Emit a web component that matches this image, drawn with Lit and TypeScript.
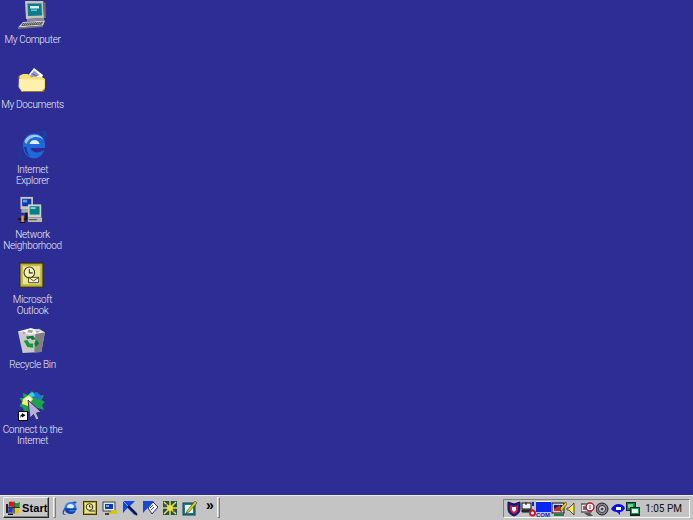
import { LitElement, html, css, svg, nothing } from "lit";
import { customElement } from "lit/decorators.js";

const flag = svg`<path d="M1 4h2v9H1z" fill="#222"/><path d="M4 2 Q6 1 8.500 2.500 L8 7 Q6 6 3.500 7Z" fill="#d8141c"/><path d="M9.500 2.500 Q12 4 15 2 L14.500 7 Q12 8.500 9 7Z" fill="#1f9a2c"/><path d="M3.500 8 Q6 7 8 8 L7.500 13 Q5.500 12 3 13Z" fill="#1c3cc8"/><path d="M9 8 Q12 9.500 14.500 8 L14 13 Q11.500 14.500 8.500 13Z" fill="#e8c814"/><path d="M3 13.500h5v1.500H3zM8.500 1.500h1v12h-1zM3 7.200h12v.8H3z" fill="#111"/>`;

const ieSmall = svg`<path d="M13.500 1.500 Q16.500 3 12 4 Q5 5 2 12 Q1 15 4.500 14 Q1.500 16 .5 13.500 Q.5 9 5 5 Q10 1 13.500 1.500Z" fill="#1c50c8"/><circle cx="8.500" cy="8" r="6" fill="#2f80ea"/><ellipse cx="8.500" cy="6.500" rx="3.300" ry="2.600" fill="#e2f2ff"/><path d="M2.800 8.200H14.500V10H6.500Q7.500 12 10 11.800L13.800 10.800Q12 14.500 8.500 14Q3 13.500 2.800 8.200Z" fill="#1244a8"/>`;

const mycomputer = svg`<g transform="translate(2,1)"><path d="M7 1 L25 1 L26 18 L8 19Z" fill="#c4c4bc"/><path d="M25 1 L27.500 3 L28 18 L26 18Z" fill="#6c6c74"/><path d="M9.500 3.500 L23.500 3.500 L24 15.500 L10 16Z" fill="#0c7c8c"/><path d="M12 6 H21 V8.500 H12Z" fill="#d6f0f4"/><path d="M13 9.500 H19 V11 H13Z" fill="#70c4d0"/><path d="M9 19 L26 18 L26 20.500 L9 21.500Z" fill="#8c8c8c"/><path d="M5 22 L27 20.500 L25 25.500 L0 27.500Z" fill="#d4d4cc"/><path d="M5 23 L25 21.800 L24 24.500 L3 26Z" fill="#50505c"/><path d="M6 23.300l18-1M5 24.500l18.500-1.100" stroke="#cfcfcf" stroke-width=".7" stroke-dasharray="1 1"/><path d="M0 27.500 L25 25.500 L25 27 L0 29Z" fill="#787878"/></g>`;

const folder = svg`<path d="M11 13 L18 4 L27 11 L25 16Z" fill="#ffffff"/><path d="M14 12 L18 6.500 L23.500 11 L18 14Z" fill="#8e98d0"/><path d="M15.500 9.500 L21 12M13.500 12 L20 14" stroke="#5a5a96" stroke-width=".8"/><path d="M3 12 L7 10 L12 10 L14 12.500 L26 13 L29 15 L29 25 L27 28 L6 28 L2.500 23Z" fill="#f7dd77"/><path d="M3.500 15 L25 15.500 L28.500 16.500 L28 25 L26.500 27 L6.500 27 L4 23Z" fill="#fff0ae"/><path d="M7 28 L27 28 L29 25 L29 24 L26 27 L6 27Z" fill="#8c7a2c"/><path d="M3 12 L3 15" stroke="#8c7a2c"/>`;

const ie = svg`<path d="M27 1.500 C32 1 32 7 29 12 L26 8 C28 5 28 3.200 25 3.600 C15 5.500 5 15 3.800 25 C3.500 29 7 30 12 27.500 C7 32 1.500 32 2.500 24 C4 13 15 3 27 1.500Z" fill="#16409e"/><path d="M7 16 A11 11.500 0 0 1 29 16 L29 19 L14.500 19 C15.500 24 23 25 28 21 C26 29 18 31 13 28 C9 26 7 21 7 16Z" fill="#2168dc"/><path d="M8.500 13 C10 7 17 4 24 7 C26 8.500 27 10 27.500 11 C23 6 13 7 10.500 15Z" fill="#9ccbff"/><path d="M13.500 15 C14.500 9.500 22.500 9.500 23.500 15Z" fill="#dcefff"/><path d="M8 18 C8.500 22 10.500 26 14 27.500 C11.500 24 10.500 21 10.500 18Z" fill="#0f3f9c"/>`;

const network = svg`<g transform="translate(2,2) scale(.83,.93)"><rect x="3" y="1" width="15" height="13" fill="#c8c8c0"/><rect x="5" y="3" width="11" height="8" fill="#1038a8"/><path d="M6 4h5v3H6z" fill="#5aa0e8"/><rect x="4" y="14" width="14" height="4" fill="#a8a8a0"/><rect x="12" y="9" width="16" height="14" fill="#d0d0c8"/><rect x="14" y="11" width="12" height="9" fill="#088088"/><path d="M15 12h6v2h-6z" fill="#80d8d8"/><rect x="12" y="23" width="17" height="5" fill="#b8b8b0"/><path d="M13 25h10v1H13z" fill="#404040"/><path d="M0 24h11v2H0z" fill="#141414"/><path d="M4 21h3v7H4z" fill="#e0a018"/><path d="M2 28h7v1H2zM9 18h2v7H9z" fill="#101010"/></g>`;

const outlook = svg`<g transform="translate(2.300,3.200) scale(.85,.89)"><rect x="2" y="1" width="27" height="27" fill="#b8ac34" stroke="#322c00"/><rect x="4" y="3" width="23" height="23" fill="#c8c050"/><rect x="5.500" y="4.500" width="20" height="20" fill="#e8e49c"/><circle cx="13" cy="11.500" r="6.200" fill="#f4f0c0" stroke="#3c3810" stroke-width="1.200"/><path d="M13 7.500V12H17" fill="none" stroke="#3c3810" stroke-width="1.200"/><path d="M12 17H24V23H12Z" fill="#f8f4c8" stroke="#3c3810"/><path d="M12 17L18 21L24 17" fill="none" stroke="#3c3810"/></g>`;

const bin = svg`<g transform="translate(-3.900,3.100) scale(1.170,.86)"><path d="M5 5 L23 2 L28 6 L25 29 L9 30Z" fill="#c8c8c8"/><path d="M20 3.500 L28 6 L25 29 L19 29.500Z" fill="#808084"/><path d="M5 5 L16 1 L28 6 L16 9Z" fill="#f4f4f4"/><path d="M8 5l4 1l-2 2zM14 3l4 1l-1 3l-4-1zM20 4l4 1l-3 2z" fill="#a0a0a8"/><path d="M12 11 L18 10 L20 14 L17 15 L16 13 L13 14Z" fill="#0a7a2c"/><path d="M10 16 L13 15 L15 19 L18 19 L18 24 L13 23Z" fill="#129a3c"/><path d="M21 15 L23 19 L20 23 L19 19Z" fill="#0a7a2c"/></g>`;

const connect = svg`<path d="M16 2 L18 6 L22 3 L22.500 7 L28 6 L25.500 11 L29 13 L26 16 L28 21 L22 19 L20 23 L8 22 L7 19 L3.500 17 L6 13 L3.500 9 L7.500 9 L7 4 L12 6Z" fill="#20a050"/><path d="M14 6 L20 3 L26 7 L24 11 L18 9Z" fill="#1c78d4"/><path d="M7 10 L13 6 L17 10 L12 17 L6 15Z" fill="#f4f060"/><path d="M9.500 9 L14 7.500 L15 11 L11 13Z" fill="#ffffff"/><path d="M13 5 L17 3 L19 7 L15 8Z" fill="#2cd8e8"/><path d="M12 11 L25 23 L20.500 24 L23 30 L20 31 L17.500 25.500 L14 29Z" fill="#b8b0dc" stroke="#282860" stroke-width=".9"/><rect x="2.500" y="22.500" width="9" height="9" fill="#fff" stroke="#000" stroke-width="1"/><path d="M4.500 29.500 V26.500 Q4.500 25.500 6 25.500 V24 L9.500 26.200 L6 28.500 V27 Q5 27 4.500 29.500Z" fill="#000"/>`;

const ICONS = [
  { label: ["My Computer"], icon: mycomputer },
  { label: ["My Documents"], icon: folder },
  { label: ["Internet", "Explorer"], icon: ie },
  { label: ["Network", "Neighborhood"], icon: network },
  { label: ["Microsoft", "Outlook"], icon: outlook },
  { label: ["Recycle Bin"], icon: bin },
  { label: ["Connect to the", "Internet"], icon: connect },
];

const QUICK = [
  ieSmall,
  svg`<rect x="1.500" y="1.500" width="13" height="13" fill="#b8ac34" stroke="#403a00"/><rect x="3" y="3" width="10" height="10" fill="#e8e49c"/><circle cx="7.500" cy="7" r="3.300" fill="#f4f0c0" stroke="#3c3810"/><path d="M7.500 5V7H9.500M7 11H13" stroke="#3c3810" fill="none"/>`,
  svg`<rect x="1" y="2" width="12" height="9" fill="#e8e8e8" stroke="#404040"/><rect x="3" y="4" width="8" height="5" fill="#1038a8"/><path d="M4 5h3v2H4z" fill="#60b0f0"/><path d="M9 10h6v4H5v-2h4z" fill="#d8c020"/><path d="M3 13h4v2H3z" fill="#404040"/>`,
  svg`<path d="M1 1H13L8 6L15 13L12.500 15L5.500 8L1 13Z" fill="#1448dc"/><path d="M6 6L15 15" stroke="#101030" stroke-width="1.800"/><path d="M1 1L6 6" stroke="#78a0f8"/>`,
  svg`<path d="M1 1H12L1 13Z" fill="#1448dc"/><path d="M6 8L11 2L16 7L10 14Z" fill="#f0f0f0" stroke="#303050"/><path d="M8 8l3-3M9 10l3-3" stroke="#505070"/>`,
  svg`<rect x="1" y="1" width="14" height="14" fill="#205050"/><path d="M2 2L14 14M14 2L2 14M8 1V15M1 8H15" stroke="#e8e040" stroke-width="1.500"/><circle cx="8" cy="8" r="3" fill="#e8e040"/><path d="M2 5h3M11 11h3" stroke="#a03070"/>`,
  svg`<rect x="1" y="3" width="12" height="12" fill="#188088" stroke="#104048"/><rect x="3" y="5" width="8" height="8" fill="#e8f4f0"/><path d="M5 11L13 1L15 3L7 12L4 13Z" fill="#e8c020" stroke="#404020" stroke-width=".6"/>`,
];

const TRAY = [
  svg`<path d="M2 1L8 3L14 1V8Q14 13 8 15Q2 13 2 8Z" fill="#1c1c88" stroke="#101050"/><path d="M4 4L8 5.500L12 4V8Q12 11 8 13Q4 11 4 8Z" fill="#d81c3c"/><path d="M6 6H10V9L8 11L6 9Z" fill="#fff"/>`,
  svg`<rect x="1" y="2" width="9" height="6" fill="#f0f0f0" stroke="#101010"/><path d="M5 1v3M1 9H12V11H1Z" fill="#404040" stroke="#101010"/><rect x="11" y="1" width="2" height="4" fill="#1028b8"/><circle cx="11.500" cy="12" r="3.500" fill="#c01c30"/><circle cx="11.500" cy="12" r="1.500" fill="#fff"/>`,
  svg`<rect x="0" y="1" width="15" height="10" fill="#0828f0"/><rect x="0" y="0" width="15" height="1" fill="#e8f0ff"/><text x="0" y="16" font-family="Liberation Sans" font-size="6" font-weight="700" fill="#1020e0">COM</text>`,
  svg`<rect x="1" y="2" width="12" height="10" fill="#d0d0d0" stroke="#101010"/><rect x="3" y="4" width="8" height="6" fill="#0c1878"/><path d="M3 8L9 4V10H3Z" fill="#c83020"/><path d="M9 7L15 1L16 3L10 11Z" fill="#e8c020" stroke="#302000" stroke-width=".5"/><path d="M3 13h10v2H3z" fill="#208040"/>`,
  svg`<path d="M1 7H3L8 2V14L3 9H1Z" fill="#f4ec50" stroke="#303018" stroke-width=".8"/>`,
  svg`<rect x="0" y="3" width="10" height="8" fill="#e4e4e4" stroke="#202020"/><path d="M2 5h6v4H2z" fill="#707078"/><circle cx="9" cy="6" r="4" fill="#fff" stroke="#c01828" stroke-width="1.500"/><path d="M9 4v4" stroke="#c01828"/><path d="M3 12l4 3h5l-3-3z" fill="#505050"/>`,
  svg`<circle cx="6" cy="8" r="6" fill="#808088" stroke="#202028"/><circle cx="6" cy="8" r="3.500" fill="#d8d8dc" stroke="#303038"/><circle cx="6" cy="8" r="1.500" fill="#404048"/>`,
  svg`<path d="M0 8Q3 3 7.500 3Q12 3 14 7Q12 11 9 11L9 14L6 11Q2 11 0 8Z" fill="#0c10e8"/><path d="M5 6h5v3H5z" fill="#fff"/>`,
  svg`<rect x="0.500" y="1.500" width="9" height="8" fill="#10804c" stroke="#0c2c1c"/><rect x="2" y="3" width="5" height="4" fill="#68d098"/><rect x="4.500" y="6.500" width="9" height="7" fill="#10a060" stroke="#0c2c1c"/><rect x="6" y="8" width="6" height="4" fill="#e8f8f0"/><path d="M4 14.500h10" stroke="#202020"/>`,
];

@customElement("app-root")
export class AppRoot extends LitElement {
  static styles = css`
    :host {
      display: flex;
      flex-direction: column;
      width: 693px;
      height: 520px;
      overflow: hidden;
      font-family: Roboto, "Liberation Sans", Arial, sans-serif;
      font-size: 10px;
    }
    .desktop {
      flex: 1;
      min-height: 0;
      background-color: #2d2d94;
      background-image: repeating-conic-gradient(#2a2a98 0 25%, #303090 0 50%);
      background-size: 2px 2px;
      overflow: hidden;
    }
    .icons {
      display: grid;
      grid-template-columns: 65px;
      grid-auto-rows: 65px;
      margin-top: -1px;
    }
    .item {
      display: flex;
      flex-direction: column;
    }
    .item svg {
      display: block;
      width: 32px;
      height: 32px;
      margin-left: 16px;
    }
    .label {
      margin-top: 3px;
      width: 65px;
      text-align: center;
      color: #ededf4;
      line-height: 11px;
      font-size: 10px;
      font-weight: 300;
      letter-spacing: -0.32px;
      white-space: nowrap;
    }
    .taskbar {
      flex: none;
      height: 25px;
      box-sizing: border-box;
      padding: 1px 3px 2px 3px;
      display: flex;
      align-items: stretch;
      background: #c4c4c4;
      border-top: 1px solid #eeeeee;
    }
    .start {
      width: 46px;
      flex: none;
      box-sizing: border-box;
      display: flex;
      align-items: center;
      gap: 1px;
      padding-left: 1px;
      background: #c6c6c6;
      border: 1px solid;
      border-color: #ececec #282828 #282828 #ececec;
      box-shadow: inset -1px -1px 0 #808080;
      font-family: "Liberation Sans", Arial, sans-serif;
      font-weight: 700;
      font-size: 11px;
      letter-spacing: 0.1px;
      color: #000;
    }
    .start svg { width: 16px; height: 16px; flex: none; }
    .grip {
      width: 3px;
      flex: none;
      box-sizing: border-box;
      border: 1px solid;
      border-color: #f4f4f4 #808080 #808080 #f4f4f4;
    }
    .grip.first { margin-left: 4px; }
    .quick {
      display: flex;
      align-items: center;
      gap: 4px;
      margin-left: 6px;
    }
    .quick svg { width: 16px; height: 16px; flex: none; display: block; }
    .more {
      margin-left: 8px;
      align-self: center;
      font-family: "Liberation Sans", Arial, sans-serif;
      font-size: 14px;
      font-weight: 700;
      line-height: 14px;
      margin-top: -6px;
      width: 11px;
      color: #000;
    }
    .spacer { flex: 1; }
    .tray {
      display: flex;
      align-items: center;
      width: 187px;
      margin-top: 2px;
      box-sizing: border-box;
      padding-left: 2px;
      border: 1px solid;
      border-color: #808080 #f6f6f6 #f6f6f6 #808080;
    }
    .row { display: flex; gap: 0; }
    .row svg { width: 16px; height: 16px; flex: none; display: block; margin-right: -1px; }
    .clock {
      margin-left: auto;
      margin-right: 7px;
      font-size: 10px;
      color: #111;
      white-space: nowrap;
    }
  `;

  render() {
    return html`
      <div class="desktop">
        <div class="icons">
          ${ICONS.map(
            (i) => html`<div class="item">
              <svg viewBox="0 0 32 32">${i.icon}</svg>
              <div class="label">${i.label.map((l, n) => html`${n ? html`<br />` : nothing}${l}`)}</div>
            </div>`
          )}
        </div>
      </div>
      <div class="taskbar">
        <div class="start"><svg viewBox="0 0 16 16">${flag}</svg>Start</div>
        <div class="grip first"></div>
        <div class="quick">
          ${QUICK.map((q) => html`<svg viewBox="0 0 16 16">${q}</svg>`)}
        </div>
        <div class="more">»</div>
        <div class="grip"></div>
        <div class="spacer"></div>
        <div class="tray">
          <div class="row">
            ${TRAY.map((q) => html`<svg viewBox="0 0 16 16">${q}</svg>`)}
          </div>
          <div class="clock">1:05 PM</div>
        </div>
      </div>
    `;
  }
}
